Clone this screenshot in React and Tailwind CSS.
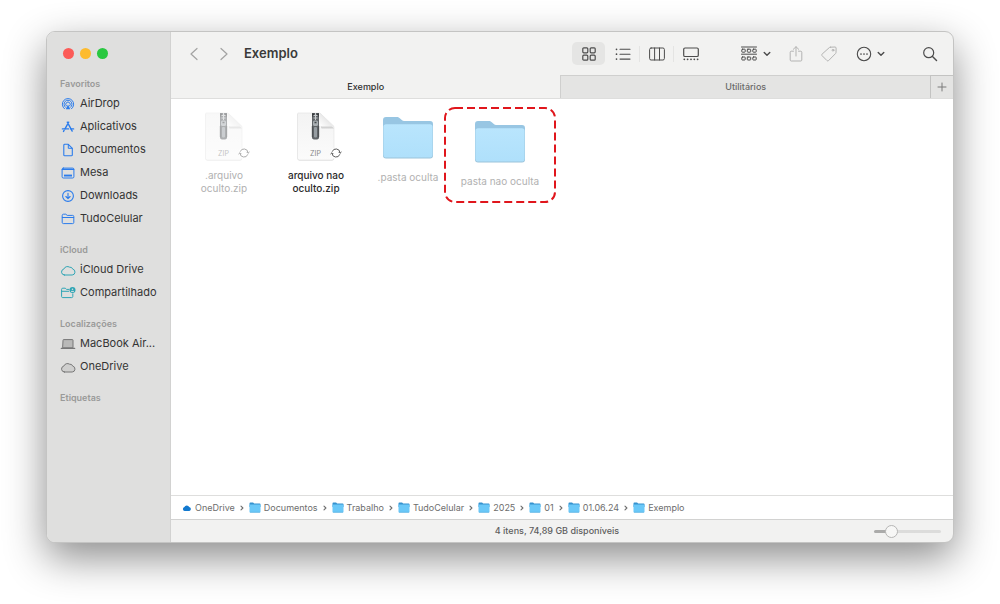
import { Fragment, useState } from 'react';
import clsx from 'clsx';

const stroke = {
  fill: 'none',
  stroke: 'currentColor',
  strokeLinecap: 'round',
  strokeLinejoin: 'round',
};

const Icon = ({ children, width = 16, height = 16, className = '' }) => (
  <svg
    width={width}
    height={height}
    viewBox={`0 0 ${width} ${height}`}
    className={clsx('shrink-0', className)}
    aria-hidden="true"
    {...stroke}
  >
    {children}
  </svg>
);

const cloudPath = 'M4.3 13h7.9a3 3 0 0 0 .5-5.9 2.8 2.8 0 0 0-3.100-1.900A3.900 3.900 0 0 0 3.800 7.100 3 3 0 0 0 4.300 13z';

const sidebarIcons = {
  airdrop: (
    <>
      <path d="M4.500 12.800a5.700 5.700 0 1 1 7 0" />
      <path d="M5.400 11.300a4 4 0 1 1 5.200 0" />
      <path d="M6.300 9.900a2.300 2.300 0 1 1 3.400 0" />
      <path d="M8 8.400 5.800 13.200h4.400z" fill="currentColor" stroke="none" />
    </>
  ),
  apps: (
    <>
      <path d="M8.700 3.200 5 9.800M7.300 3.200l4.900 8.900M4.100 11.400l-.6 1" strokeWidth="1.400" />
      <path d="M2.400 9.900h6.200M10.900 9.900h2.700" strokeWidth="1.400" />
    </>
  ),
  document: (
    <>
      <path d="M3.800 3.200c0-.6.300-.9.900-.9h3.600l4 4v6.600c0 .6-.3.900-.9.900H4.700c-.6 0-.9-.3-.9-.9z" strokeWidth="1.100" />
      <path d="M8.300 2.500v3.800h3.800" />
    </>
  ),
  desktop: (
    <>
      <rect x="2.100" y="3.100" width="11.800" height="9.900" rx="1.200" />
      <path d="M2.300 4.300h11.400" strokeWidth="1.300" />
      <rect x="4" y="9.600" width="8" height="1.900" fill="currentColor" stroke="none" />
    </>
  ),
  download: (
    <>
      <circle cx="8" cy="8" r="5.400" strokeWidth="1.100" />
      <path d="M8 5.200v5.300M5.900 8.500 8 10.600l2.100-2.100" strokeWidth="1.100" />
    </>
  ),
  folder: (
    <>
      <path d="M2.200 4.300c0-.7.400-1.100 1.100-1.100h2.500l1.400 1.200h5.500c.7 0 1.100.4 1.100 1.100v6c0 .7-.4 1.100-1.100 1.100H3.300c-.7 0-1.100-.4-1.100-1.100z" />
      <path d="M2.300 6.500h11.400" />
    </>
  ),
  cloud: <path d={cloudPath} />,
  grayCloud: <path d={cloudPath} fill="#cfcfce" />,
  shared: (
    <>
      <path d="M9 4.400H6.500L5.300 3.200H2.800c-.8 0-1.200.4-1.200 1.100v7.200c0 .7.400 1.100 1.100 1.100h9c.7 0 1.100-.4 1.100-1.100V8.800M1.700 6.300h7" />
      <circle cx="12.500" cy="5" r="3" fill="currentColor" stroke="none" />
      <circle cx="12.500" cy="4.200" r=".8" fill="#dfdfde" stroke="none" />
      <path d="M11.500 6.400h2" stroke="#dfdfde" />
    </>
  ),
  laptop: (
    <>
      <path d="M3 4.100c0-.3.200-.5.500-.5h9c.3 0 .5.200.5.500v7.700H3z" fill="#b9b9b8" />
      <path d="M1.300 12.400h13.400" strokeWidth="1.200" />
    </>
  ),
};

const sections = [
  {
    title: 'Favoritos',
    color: 'text-[#2b7cec]',
    items: [
      { label: 'AirDrop', icon: 'airdrop' },
      { label: 'Aplicativos', icon: 'apps' },
      { label: 'Documentos', icon: 'document' },
      { label: 'Mesa', icon: 'desktop' },
      { label: 'Downloads', icon: 'download' },
      { label: 'TudoCelular', icon: 'folder' },
    ],
  },
  {
    title: 'iCloud',
    color: 'text-[#2fa5b5]',
    items: [
      { label: 'iCloud Drive', icon: 'cloud' },
      { label: 'Compartilhado', icon: 'shared' },
    ],
  },
  {
    title: 'Localizações',
    color: 'text-[#777777]',
    items: [
      { label: 'MacBook Air...', icon: 'laptop' },
      { label: 'OneDrive', icon: 'grayCloud' },
    ],
  },
  { title: 'Etiquetas', color: '', items: [] },
];

const Sidebar = () => (
  <aside className="w-[124px] shrink-0 border-r border-[#d2d2d1] bg-[#dfdfde]">
    <div className="flex h-[43px] items-center gap-1.5 pl-4">
      <button type="button" aria-label="Fechar" className="size-[11px] rounded-full bg-[#fc5b57]" />
      <button type="button" aria-label="Minimizar" className="size-[11px] rounded-full bg-[#fdbb2e]" />
      <button type="button" aria-label="Ampliar" className="size-[11px] rounded-full bg-[#29c840]" />
    </div>
    <nav className="flex flex-col gap-3 pt-px">
      {sections.map(({ title, color, items }) => (
        <section key={title}>
          <h2 className="pl-[13px] text-[9px] leading-4 font-semibold text-[#9a9a99]">{title}</h2>
          <ul>
            {items.map(({ label, icon }) => (
              <li key={label}>
                <a href="#" className="flex h-[23px] items-center gap-1 pl-[13px] text-[11px] whitespace-nowrap text-[#343434]">
                  <Icon className={color}>{sidebarIcons[icon]}</Icon>
                  {label}
                </a>
              </li>
            ))}
          </ul>
        </section>
      ))}
    </nav>
  </aside>
);

const viewModes = [
  {
    id: 'Ícones',
    icon: (
      <g strokeWidth="1.200">
        <rect x="1.800" y="1.800" width="5" height="5" rx="1" />
        <rect x="9.200" y="1.800" width="5" height="5" rx="1" />
        <rect x="1.800" y="9.200" width="5" height="5" rx="1" />
        <rect x="9.200" y="9.200" width="5" height="5" rx="1" />
      </g>
    ),
  },
  {
    id: 'Lista',
    icon: (
      <>
        <path d="M5 3.300h10M5 8.200h10M5 13.100h10" strokeWidth="1.100" />
        <path d="M1.500 3.300h.01M1.500 8.200h.01M1.500 13.100h.01" strokeWidth="1.700" />
      </>
    ),
  },
  {
    id: 'Colunas',
    icon: (
      <>
        <rect x=".6" y="2" width="14.800" height="12" rx="1.500" />
        <path d="M5.600 2v12M10.500 2v12" />
      </>
    ),
  },
  {
    id: 'Galeria',
    icon: (
      <>
        <rect x=".7" y="2" width="14.600" height="8.500" rx="1.300" strokeWidth="1.200" />
        <path d="M1.300 13.300h.01M4.600 13.300h.01M8 13.300h.01M11.300 13.300h.01M14.600 13.300h.01" strokeWidth="1.800" />
      </>
    ),
  },
];

const Chevron = () => (
  <Icon width={8} height={6}>
    <path d="m1.200 1.500 2.800 2.800 2.800-2.800" strokeWidth="1.400" />
  </Icon>
);

const Toolbar = () => {
  const [view, setView] = useState('Ícones');

  return (
    <header className="flex h-[43px] items-center pr-[15px] pl-[18px] text-[#4c4c4c]">
      <button type="button" aria-label="Voltar" className="text-[#a3a3a2]">
        <Icon width={10} height={14}>
          <path d="M8 1.500 2 7l6 5.500" strokeWidth="1.200" />
        </Icon>
      </button>
      <button type="button" aria-label="Avançar" className="ml-5 text-[#a3a3a2]">
        <Icon width={10} height={14}>
          <path d="M2 1.500 8 7l-6 5.500" strokeWidth="1.200" />
        </Icon>
      </button>
      <h1 className="ml-[15px] text-[13px] font-semibold text-[#3a3a3a]">Exemplo</h1>

      <div className="ml-auto flex items-center">
        {viewModes.map(({ id, icon }, index) => (
          <Fragment key={id}>
            {index > 0 && <span className={clsx('h-4 w-px', index > 1 && 'bg-[#e4e4e3]')} />}
            <button
              type="button"
              aria-label={id}
              aria-pressed={view === id}
              onClick={() => setView(id)}
              className={clsx('flex h-[23px] w-[33px] items-center justify-center rounded-[5px]', view === id && 'bg-[#e5e5e4]')}
            >
              <Icon>{icon}</Icon>
            </button>
          </Fragment>
        ))}
      </div>

      <button type="button" aria-label="Agrupar" className="ml-[34px] flex items-center gap-1.5">
        <Icon>
          <path d="M.5 1h15M.5 8.200h15" />
          <rect x=".8" y="3.200" width="3.400" height="3" rx=".6" />
          <rect x="6.300" y="3.200" width="3.400" height="3" rx=".6" />
          <rect x="11.800" y="3.200" width="3.400" height="3" rx=".6" />
          <rect x=".8" y="11" width="3.400" height="3" rx=".6" />
          <rect x="6.300" y="11" width="3.400" height="3" rx=".6" />
          <rect x="11.800" y="11" width="3.400" height="3" rx=".6" />
        </Icon>
        <Chevron />
      </button>
      <button type="button" aria-label="Compartilhar" className="ml-[17px] text-[#b3b3b2]">
        <Icon>
          <path d="M5.500 5.200H3.200c-.6 0-1 .4-1 1v7.800c0 .6.400 1 1 1h9.600c.6 0 1-.4 1-1V6.200c0-.6-.4-1-1-1h-2.300M8 10V.8M5.300 3.300 8 .7l2.700 2.600" />
        </Icon>
      </button>
      <button type="button" aria-label="Etiquetas" className="ml-[17px] text-[#b3b3b2]">
        <Icon>
          <path d="M9.400 1.200 14 1c.7 0 1.100.4 1.100 1.100L15 6.600c0 .4-.2.7-.5 1l-6.900 7c-.5.500-1.100.500-1.600 0L1.100 9.700c-.5-.5-.5-1.100 0-1.600l7.200-6.500c.3-.3.700-.4 1.100-.4z" />
          <circle cx="12" cy="4.200" r=".9" />
        </Icon>
      </button>
      <button type="button" aria-label="Mais ações" className="ml-[19px] flex items-center gap-[5px]">
        <Icon>
          <circle cx="8" cy="8" r="6.700" strokeWidth="1.100" />
          <path d="M5 8h.01M8 8h.01M11 8h.01" strokeWidth="1.700" />
        </Icon>
        <Chevron />
      </button>
      <button type="button" aria-label="Buscar" className="ml-[37px]">
        <Icon>
          <circle cx="6.700" cy="6.700" r="5" strokeWidth="1.200" />
          <path d="m10.500 10.500 4 4" strokeWidth="1.500" />
        </Icon>
      </button>
    </header>
  );
};

const Tabs = () => (
  <div className="flex h-6 border-b border-[#dededd] text-[9px] font-medium" role="tablist">
    <button type="button" role="tab" aria-selected="true" className="flex-[390] text-[#2f2f2f]">
      Exemplo
    </button>
    <button
      type="button"
      role="tab"
      aria-selected="false"
      className="flex-[369] border-t border-l border-[#cfcfce] bg-[#e4e4e3] text-[#6a6a6a]"
    >
      Utilitários
    </button>
    <button
      type="button"
      aria-label="Nova aba"
      className="flex w-[23px] items-center justify-center border-t border-l border-[#c3c3c2] bg-[#e4e4e3] text-[#7b7b7b]"
    >
      <Icon width={10} height={10}>
        <path d="M5 1v8M1 5h8" />
      </Icon>
    </button>
  </div>
);

const ZipIcon = ({ faded }) => (
  <svg width="52" height="52" viewBox="0 0 52 52" className={clsx(faded && 'opacity-50')} aria-hidden="true">
    <defs>
      <linearGradient id="paper" x1="0" y1="0" x2="0" y2="1">
        <stop offset="0" stopColor="#f3f3f3" />
        <stop offset="1" stopColor="#fbfbfb" />
      </linearGradient>
      <linearGradient id="fold" x1="0" y1="1" x2="1" y2="0">
        <stop offset="0" stopColor="#ffffff" />
        <stop offset=".6" stopColor="#e4e4e4" />
      </linearGradient>
    </defs>
    <path d="M8.500 2.500h22L44 15.500v32c0 1.200-.7 2-2 2H9.500c-1.200 0-2-.8-2-2v-44c0-.6.400-1 1-1z" fill="#d3d3d3" />
    <path d="M8.500 2h21.500L44 15.500V47c0 1.200-.7 2-2 2H9.500c-1.200 0-2-.8-2-2V3c0-.6.400-1 1-1z" fill="url(#paper)" stroke="#e2e2e2" strokeWidth=".6" />
    <path d="M31 3.500v12.500c0 1 .5 1.500 1.500 1.500H44z" fill="#d2d2d2" />
    <path d="M30 2v11.500c0 1.300.7 2 2 2h12z" fill="url(#fold)" />
    <path d="M22 2h7v24.500c0 1.500-1 2-3.500 2s-3.500-.5-3.500-2z" fill="#606468" />
    <path d="M22 2.500h2.500l-2 4zM29 2.500h-2.500l2 4z" fill="#35383b" />
    <path d="M25.500 2v7M23.500 4.500h4M23.500 7h4" stroke="#c7cbcd" strokeWidth="1" />
    <rect x="23" y="9.500" width="5" height="5.500" rx="1.500" fill="#a9afb3" />
    <path d="M24.500 11.500h2" stroke="#45494c" strokeWidth="1.500" />
    <rect x="24" y="16" width="3" height="10.500" rx="1" fill="#969da2" />
    <path d="M22.300 15v11M28.700 15v11" stroke="#43474a" strokeWidth=".8" />
    <text x="25.500" y="45" textAnchor="middle" fontSize="7" fill="#858585">
      ZIP
    </text>
    <circle cx="46" cy="42" r="5.500" fill="#ffffff" />
    <g fill="none" stroke="#5d5d5d" strokeWidth="1">
      <path d="M42.200 40.700a4 4 0 0 1 7.800 1.300M49.800 43.300a4 4 0 0 1-7.800-1.300" />
      <path d="m48.600 40.900 1.400 1.400 1.500-1.400M43.400 43.100 42 41.700l-1.500 1.400" />
    </g>
  </svg>
);

const FolderIcon = () => (
  <svg width="52" height="44" viewBox="0 0 52 44" aria-hidden="true">
    <defs>
      <linearGradient id="folder" x1="0" y1="0" x2="0" y2="1">
        <stop offset="0" stopColor="#b9e5fd" />
        <stop offset="1" stopColor="#afe0fb" />
      </linearGradient>
    </defs>
    <path d="M1 4c0-2 1-3 3-3h10.500c1.500 0 2.300.4 3.300 1.300l2 1.600c.9.800 1.600 1.100 3 1.100H48c2 0 3 1 3 3v10H1z" fill="#98c6e3" />
    <path d="M1 12c0-2 1-3 3-3h44c2 0 3 1 3 3v27.500c0 2-1 3-3 3H4c-2 0-3-1-3-3z" fill="#9bc3da" />
    <path d="M1.400 10.800c0-1.800 1-2.600 2.700-2.600h43.800c1.700 0 2.700.8 2.700 2.600v28c0 1.900-1 2.800-2.700 2.800H4.100c-1.700 0-2.700-.9-2.700-2.800z" fill="url(#folder)" />
  </svg>
);

const files = [
  { name: '.arquivo oculto.zip', type: 'zip', hidden: true },
  { name: 'arquivo nao oculto.zip', type: 'zip' },
  { name: '.pasta oculta', type: 'folder', hidden: true },
  { name: 'pasta nao oculta', type: 'folder', hidden: true, marked: true },
];

const FileItem = ({ name, type, hidden, marked }) => (
  <li className={clsx('relative flex w-[92px] flex-col items-center', type === 'folder' && 'pt-[5px]', marked && 'mt-1')}>
    {type === 'zip' ? <ZipIcon faded={hidden} /> : <FolderIcon />}
    <span
      className={clsx(
        'text-center text-[10px] leading-[13px]',
        type === 'zip' ? 'mt-1.5 w-[66px]' : 'mt-[11px] whitespace-nowrap',
        hidden ? 'text-[#b1b1b1]' : 'font-medium text-[#2a2a2a]'
      )}
    >
      {name}
    </span>
    {marked && (
      <svg width="112" height="96" viewBox="0 0 112 96" className="absolute -top-2 -left-[10px]" aria-hidden="true">
        <rect x="1" y="1" width="110" height="94" rx="10" fill="none" stroke="#e0161c" strokeWidth="2" strokeDasharray="8 4" />
      </svg>
    )}
  </li>
);

const path = ['OneDrive', 'Documentos', 'Trabalho', 'TudoCelular', '2025', '01', '01.06.24', 'Exemplo'];

const PathBar = () => (
  <nav className="h-6 border-t border-[#dededd] bg-white pl-[11px] text-[9px] text-[#6d6d6d]">
    <ol className="flex h-full items-center gap-[5px]">
      {path.map((name, index) => (
        <li key={name} className="flex items-center gap-[5px]">
          <a href="#" className="flex items-center gap-[3px]">
            {index === 0 ? (
              <svg width="10" height="8" viewBox="0 0 10 8" aria-hidden="true">
                <path d="M2.600 7a2 2 0 0 1-.2-3.900A2.600 2.600 0 0 1 7.200 2.900 2.100 2.100 0 0 1 7.300 7z" fill="#1279cf" />
              </svg>
            ) : (
              <svg width="12" height="11" viewBox="0 0 12 11" aria-hidden="true">
                <path d="M.5 1.500c0-.6.300-.9.900-.9h2.700l1 .8h5.600c.5 0 .8.300.8.800V5H.5z" fill="#3592cf" />
                <rect x=".5" y="2.500" width="11" height="8" rx=".8" fill="#6ac8f8" />
                <path d="M.9 10.300h10.200" stroke="#51a9dc" strokeWidth=".6" />
              </svg>
            )}
            {name}
          </a>
          {index < path.length - 1 && (
            <Icon width={4} height={6}>
              <path d="M1 1.200 2.900 3 1 4.800" strokeWidth="1.100" />
            </Icon>
          )}
        </li>
      ))}
    </ol>
  </nav>
);

const StatusBar = () => {
  const [size, setSize] = useState(21);

  return (
    <footer className="grid h-[23px] grid-cols-[1fr_auto_1fr] items-center border-t border-[#d2d2d1] pr-3 pl-0.5 text-[9px] font-medium text-[#5e5e5e]">
      <span />
      <p>4 itens, 74,89 GB disponíveis</p>
      <input
        type="range"
        aria-label="Tamanho dos ícones"
        value={size}
        onChange={(e) => setSize(e.target.value)}
        className="h-[3px] w-[67px] appearance-none justify-self-end rounded-full bg-linear-to-r from-[#ababaa] from-25% to-[#dcdcdb] to-25% [&::-webkit-slider-thumb]:size-[13px] [&::-webkit-slider-thumb]:appearance-none [&::-webkit-slider-thumb]:rounded-full [&::-webkit-slider-thumb]:border [&::-webkit-slider-thumb]:border-[#b5b5b4] [&::-webkit-slider-thumb]:bg-[#f7f7f6]"
      />
    </footer>
  );
};

const App = () => (
  <div className="flex min-h-screen bg-white px-[46px] pt-[31px] pb-[61px] font-['Inter',sans-serif]">
    <div className="flex flex-1 overflow-hidden rounded-[9px] border border-[#c4c4c3] bg-[#f2f2f1] shadow-[0_15px_40px_rgba(0,0,0,0.45)]">
      <Sidebar />
      <main className="flex min-w-0 flex-1 flex-col">
        <Toolbar />
        <Tabs />
        <ul className="flex flex-1 flex-wrap content-start bg-white pt-3 pl-[7px]">
          {files.map((file) => (
            <FileItem key={file.name} {...file} />
          ))}
        </ul>
        <PathBar />
        <StatusBar />
      </main>
    </div>
  </div>
);

export default App;
